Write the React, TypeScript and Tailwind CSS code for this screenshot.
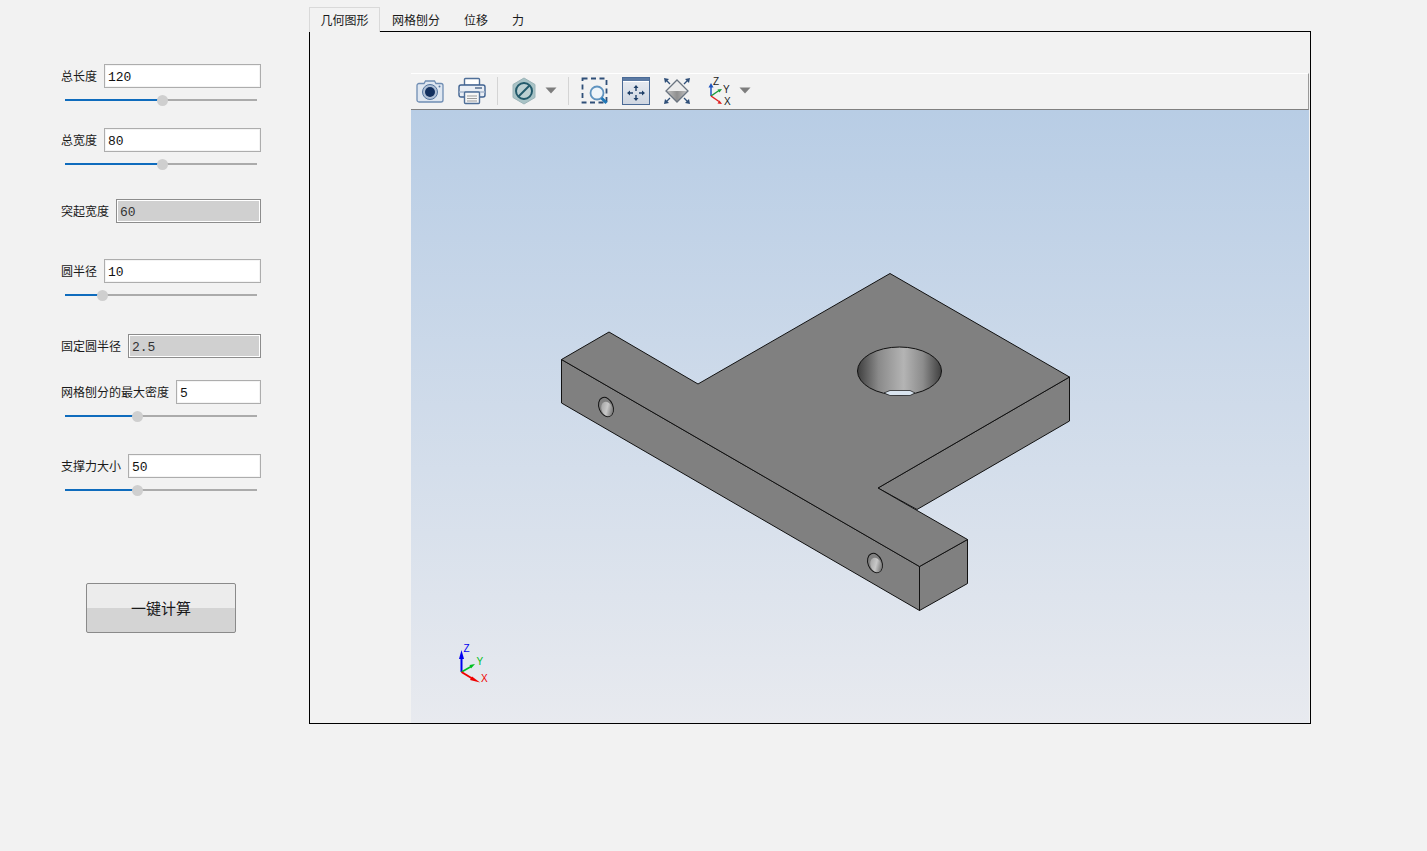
import React from 'react';

const CJK = "font-['Noto_Sans_CJK_SC','Noto_Sans',sans-serif]";

interface FieldProps {
  label: string;
  value: string;
  disabled?: boolean;
  percent?: number;
  className?: string;
}

const Field: React.FC<FieldProps> = ({ label, value, disabled, percent, className }) => (
  <div className={className}>
    <div className="flex h-6 items-center gap-[7px]">
      <span className="text-[12px] whitespace-nowrap text-[#1a1a1a]">{label}</span>
      <input
        readOnly
        value={value}
        className={
          disabled
            ? "h-6 min-w-0 flex-1 border border-[#8c8c8c] bg-[#d0d0d0] px-[3px] pt-[2px] font-['Liberation_Mono',monospace] text-[13px] text-[#333] shadow-[inset_0_0_0_1px_#ffffff] outline-none"
            : "h-6 min-w-0 flex-1 border border-[#adadad] bg-white px-[3px] pt-[2px] font-['Liberation_Mono',monospace] text-[13px] text-[#111] shadow-[inset_0_0_0_1px_#f4f4f4] outline-none"
        }
      />
    </div>
    {percent !== undefined && (
      <div className="ml-1 flex h-6 w-[192px] items-center">
        <div className="h-[2px] bg-[#0f6cbd]" style={{ width: `${percent}%` }} />
        <div className="-mx-[5px] z-10 h-[11px] w-[11px] shrink-0 rounded-full bg-[#cfcfcf]" />
        <div className="h-[2px] flex-1 bg-[#ababab]" />
      </div>
    )}
  </div>
);

const Tabs = () => (
  <div className={`flex h-6 items-start text-[12px] text-[#1a1a1a] ${CJK}`}>
    <div className="z-10 flex h-[25px] w-[71px] items-center justify-center border border-b-0 border-[#d9d9d9] bg-[#f2f2f2]">
      几何图形
    </div>
    <div className="flex h-6 items-center px-3 pt-px">网格刨分</div>
    <div className="flex h-6 items-center px-3 pt-px">位移</div>
    <div className="flex h-6 items-center px-3 pt-px">力</div>
  </div>
);

const Caret = () => (
  <svg width="12" height="7" viewBox="0 0 12 7">
    <path d="M0.5 0.5h11L6 6.5z" fill="#7d7d7d" />
  </svg>
);

const Divider = () => <div className="h-7 w-px bg-[#d4d4d4]" />;

const CameraIcon = () => (
  <svg width="28" height="24" viewBox="0 0 28 24">
    <path d="M1 6.5a2 2 0 0 1 2-2h5l1.500-2.500h9L20 4.500h5a2 2 0 0 1 2 2V21a2 2 0 0 1-2 2H3a2 2 0 0 1-2-2z" fill="#dfe7f1" stroke="#6f8db3" strokeWidth="1.300" />
    <circle cx="14" cy="13" r="7.500" fill="#aebfd6" stroke="#54759f" />
    <circle cx="14" cy="13" r="5" fill="#12305f" />
    <circle cx="23.500" cy="7.500" r="1" fill="#54759f" />
  </svg>
);

const PrinterIcon = () => (
  <svg width="28" height="28" viewBox="0 0 28 28">
    <rect x="6.500" y="1.500" width="15" height="7" rx="1" fill="#fff" stroke="#4f6f98" strokeWidth="1.400" />
    <rect x="1" y="8" width="26" height="12" rx="2" fill="#e9eef5" stroke="#3f6290" strokeWidth="1.400" />
    <rect x="17" y="10" width="7" height="2" fill="#7a8ea9" />
    <rect x="1.500" y="14" width="25" height="2" fill="#b9c6d8" />
    <rect x="6.500" y="15" width="15" height="11.500" rx="1" fill="#f6f6f6" stroke="#4f6f98" strokeWidth="1.400" />
    <path d="M9 19h10M9 21.500h10M9 24h10" stroke="#9b9b9b" />
  </svg>
);

const HexIcon = () => (
  <svg width="24" height="28" viewBox="0 0 24 28">
    <path d="M12 1l11 6.500v13L12 27 1 20.500v-13z" fill="#a9c3c6" stroke="#9bb4b8" />
    <circle cx="12" cy="14" r="8" fill="#bcd0d2" stroke="#235a6b" strokeWidth="2" />
    <path d="M6.500 19.500l11-11" stroke="#235a6b" strokeWidth="2" />
  </svg>
);

const ZoomBoxIcon = () => (
  <svg width="28" height="28" viewBox="0 0 28 28">
    <rect x="1.500" y="1.500" width="24" height="24" fill="none" stroke="#2f4f78" strokeWidth="1.800" strokeDasharray="5 3.500" />
    <circle cx="16" cy="16" r="6.500" fill="#eef4f9" stroke="#5f93bf" strokeWidth="1.800" />
    <path d="M20.500 21l5 5" stroke="#1f78b8" strokeWidth="3" />
  </svg>
);

const FitIcon = () => (
  <svg width="28" height="28" viewBox="0 0 28 28">
    <defs>
      <linearGradient id="fitbg" x1="0" x2="0" y1="0" y2="1">
        <stop offset="0" stopColor="#e9edf3" />
        <stop offset="1" stopColor="#cfd6e1" />
      </linearGradient>
    </defs>
    <rect x="0.500" y="0.500" width="27" height="27" fill="url(#fitbg)" stroke="#4a6a96" />
    <rect x="1" y="1" width="26" height="3" fill="#5c7aa3" />
    <rect x="1" y="4" width="26" height="1" fill="#fff" />
    <path d="M14 10v4M14 18v4M7 16h4M17 16h4" stroke="#1f3f68" strokeWidth="1.400" />
    <path d="M14 8l-2.500 3h5zM14 24l-2.500-3h5zM5 16l3-2.500v5zM23 16l-3-2.500v5z" fill="#1f3f68" />
  </svg>
);

const DiamondIcon = () => (
  <svg width="28" height="28" viewBox="0 0 28 28">
    <defs>
      <linearGradient id="gem" x1="0" x2="1" y1="0" y2="0">
        <stop offset="0" stopColor="#c4c4c4" />
        <stop offset="0.5" stopColor="#8f8f8f" />
        <stop offset="1" stopColor="#c4c4c4" />
      </linearGradient>
    </defs>
    <path d="M14 3l11 11H3z" fill="#ececec" />
    <path d="M3 14h22L14 25z" fill="url(#gem)" />
    <path d="M14 3l11 11-11 11L3 14z" fill="none" stroke="#6a7480" strokeWidth="1.300" />
    <path d="M3 3l4 4M25 3l-4 4M3 25l4-4M25 25l-4-4" stroke="#2f4f78" strokeWidth="1.300" />
    <path d="M1 1l5 1-4 4zM27 1l-5 1 4 4zM1 27l5-1-4-4zM27 27l-5-1 4-4z" fill="#2f4f78" />
  </svg>
);

const AxesIcon = () => (
  <svg width="26" height="30" viewBox="0 0 26 30" className="font-['Liberation_Sans',sans-serif]">
    <path d="M4 20V10" stroke="#1f55c0" strokeWidth="1.500" />
    <path d="M4 7l-2.500 4.500h5z" fill="#1f55c0" />
    <path d="M4 20l8-5.500" stroke="#1a9a3a" strokeWidth="1.500" />
    <path d="M15 13l-4.500 0.500 2 3z" fill="#1a9a3a" />
    <path d="M4 20l8 5.500" stroke="#e02020" strokeWidth="1.500" />
    <path d="M15 28l-4.500-0.500 2-3z" fill="#e02020" />
    <text x="6" y="9" fontSize="10" fill="#222">Z</text>
    <text x="16" y="17" fontSize="10" fill="#222">Y</text>
    <text x="17" y="29" fontSize="10" fill="#222">X</text>
  </svg>
);

const Toolbar = () => (
  <div className="flex h-[37px] items-center border-t border-r border-b border-t-white border-r-[#9a9a9a] border-b-[#808080] bg-[#f2f2f2] pb-[2px] pl-[5px]">
    <CameraIcon />
    <div className="ml-[14px]"><PrinterIcon /></div>
    <div className="ml-[11px]"><Divider /></div>
    <div className="ml-[14px]"><HexIcon /></div>
    <div className="ml-[9px]"><Caret /></div>
    <div className="ml-[11px]"><Divider /></div>
    <div className="ml-3"><ZoomBoxIcon /></div>
    <div className="ml-[13px]"><FitIcon /></div>
    <div className="ml-[13px]"><DiamondIcon /></div>
    <div className="ml-4"><AxesIcon /></div>
    <div className="ml-[6px]"><Caret /></div>
  </div>
);

const Model = () => (
  <svg viewBox="411 110 898 613" className="h-full w-full font-['Liberation_Sans',sans-serif]">
    <defs>
      <linearGradient id="bore" x1="0" x2="1" y1="0" y2="0">
        <stop offset="0" stopColor="#3f3f3f" />
        <stop offset="0.25" stopColor="#8a8a8a" />
        <stop offset="0.55" stopColor="#b4b4b4" />
        <stop offset="0.78" stopColor="#8c8c8c" />
        <stop offset="1" stopColor="#3f3f3f" />
      </linearGradient>
      <linearGradient id="pin" x1="0" x2="1" y1="0" y2="1">
        <stop offset="0" stopColor="#9a9a9a" />
        <stop offset="0.5" stopColor="#c8c8c8" />
        <stop offset="1" stopColor="#555" />
      </linearGradient>
    </defs>
    <g stroke="#111" strokeWidth="1" strokeLinejoin="round" fill="#808080">
      {/* side walls */}
      <path d="M561.500 359.500L919.500 566.500V610.500L561.500 403z" />
      <path d="M919.500 566.500L967.500 539.500V583.500L919.500 610.500z" />
      <path d="M878 488L1069.500 377V421L917 509.500z" />
      {/* top face */}
      <path d="M561.500 359.500L609 332L698 384L890 273.500L1069.500 377L878 488L967.500 539.500L919.500 566.500z" />
      {/* bore */}
      <ellipse cx="899.500" cy="371" rx="42" ry="24" fill="url(#bore)" />
      <path d="M884 393L890 390.500H910L915 393L910 395.500H890z" fill="#d9e4ef" strokeWidth="0.700" />
      {/* fixing holes */}
      <ellipse cx="606" cy="407" rx="7" ry="10" transform="rotate(-22 606 407)" />
      <ellipse cx="607" cy="409" rx="5.500" ry="7.500" transform="rotate(-22 607 409)" fill="url(#pin)" stroke="none" />
      <ellipse cx="875" cy="563" rx="7" ry="10" transform="rotate(-22 875 563)" />
      <ellipse cx="876" cy="565" rx="5.500" ry="7.500" transform="rotate(-22 876 565)" fill="url(#pin)" stroke="none" />
    </g>
    {/* triad */}
    <path d="M461.500 672V656" stroke="#0000f0" strokeWidth="2" />
    <path d="M461.500 650l-2.500 9h5z" fill="#0000f0" />
    <path d="M461.500 672L472 666" stroke="#00c020" strokeWidth="1.500" />
    <path d="M475 664l-5.500 1 1.500 3.500z" fill="#00c020" />
    <path d="M461.500 672L473 679" stroke="#f00000" strokeWidth="2" />
    <path d="M480 682.500l-8-6-2 3.500z" fill="#f00000" />
    <text x="463.500" y="651.500" fontSize="10" fill="#0000f0">Z</text>
    <text x="476.500" y="665" fontSize="10" fill="#00c020">Y</text>
    <text x="481" y="682" fontSize="10" fill="#f00000">X</text>
  </svg>
);

export default function App() {
  return (
    <div className={`flex h-[851px] w-full bg-[#f2f2f2] ${CJK}`}>
      {/* Parameters */}
      <aside className="w-[309px] shrink-0 pt-16 pl-[61px]">
        <div className="w-[200px]">
          <Field label="总长度" value="120" percent={50.4} />
          <Field label="总宽度" value="80" percent={50.4} className="mt-4" />
          <Field label="突起宽度" value="60" disabled className="mt-[23px]" />
          <Field label="圆半径" value="10" percent={19.3} className="mt-9" />
          <Field label="固定圆半径" value="2.5" disabled className="mt-[27px]" />
          <Field label="网格刨分的最大密度" value="5" percent={37.4} className="mt-[22px]" />
          <Field label="支撑力大小" value="50" percent={37.4} className="mt-[26px]" />
          <button className="mt-[81px] ml-[25px] h-[50px] w-[150px] rounded-[2px] border border-[#8a8a8a] bg-[linear-gradient(#ececec_50%,#d4d4d4_50%)] text-[15px] text-[#1a1a1a]">
            一键计算
          </button>
        </div>
      </aside>

      {/* Viewer */}
      <main className="w-[1002px] shrink-0 pt-[7px]">
        <Tabs />
        <div className="h-[693px] border border-black pt-[41px] pl-[101px]">
          <div className="flex h-full w-[898px] flex-col">
            <Toolbar />
            <div className="min-h-0 flex-1 bg-gradient-to-b from-[#b8cde5] to-[#e8eaef]">
              <Model />
            </div>
          </div>
        </div>
      </main>
    </div>
  );
}
